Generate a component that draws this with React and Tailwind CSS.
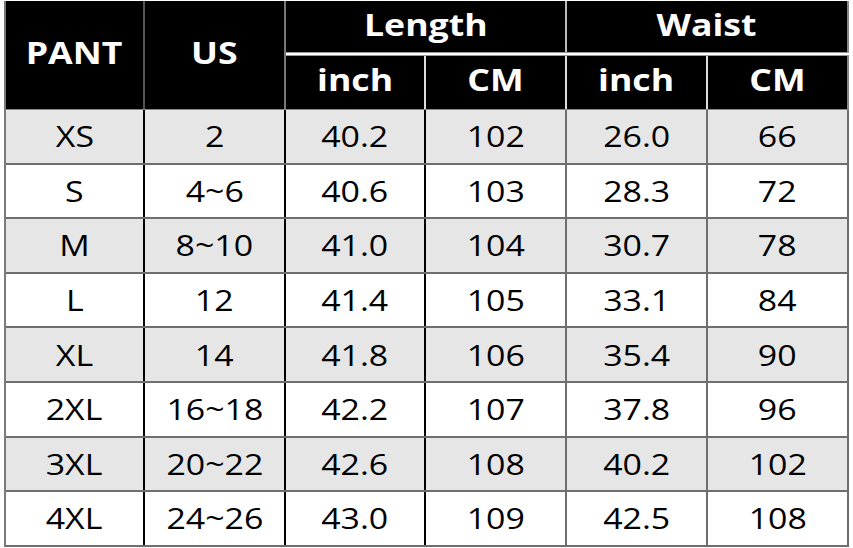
import React from 'react';

const rows = [
  ['XS', '2', '40.2', '102', '26.0', '66'],
  ['S', '4~6', '40.6', '103', '28.3', '72'],
  ['M', '8~10', '41.0', '104', '30.7', '78'],
  ['L', '12', '41.4', '105', '33.1', '84'],
  ['XL', '14', '41.8', '106', '35.4', '90'],
  ['2XL', '16~18', '42.2', '107', '37.8', '96'],
  ['3XL', '20~22', '42.6', '108', '40.2', '102'],
  ['4XL', '24~26', '43.0', '109', '42.5', '108'],
];

// line colour of each column's right edge in the body
const bodyLines = ['border-black', 'border-black', 'border-black', 'border-[#6e6e6e]', 'border-[#6e6e6e]', 'border-[#6e6e6e]'];
const widths = ['w-[141px]', 'w-[141px]', 'w-[140px]', 'w-[141px]', 'w-[141px]', 'w-[141px]'];

function Txt({ children, bold }) {
  return (
    <span className={`inline-block leading-none ${bold ? 'scale-x-[1.15] text-[31px] font-bold text-white' : 'scale-x-[1.13] text-[30px] text-black'}`}>
      {children}
    </span>
  );
}

export default function App() {
  return (
    <div className="w-[853px] h-[548px] bg-white pl-[4px] pt-[1px]" style={{ fontFamily: '"Open Sans", "Noto Sans", sans-serif' }}>
      <div className="w-[845px] border-l-2 border-[#7a7a7a]">
        {/* header */}
        <div className="flex h-[109px] border-b border-[#8a8a8a]">
          <div className="w-[139px] bg-black border-r-2 border-[#555] flex items-center justify-center pb-[6px]">
            <Txt bold>PANT</Txt>
          </div>
          <div className="w-[141px] bg-black border-r-2 border-[#777] flex items-center justify-center pb-[6px]">
            <Txt bold>US</Txt>
          </div>
          <div className="flex-1 flex flex-col">
            <div className="flex h-[51px]">
              <div className="w-[281px] bg-black border-r-2 border-[#bbb] flex items-center justify-center pb-[3px]">
                <Txt bold>Length</Txt>
              </div>
              <div className="flex-1 bg-black border-r-2 border-[#888] flex items-center justify-center pb-[3px]">
                <Txt bold>Waist</Txt>
              </div>
            </div>
            <div className="h-[5px] bg-white border-y border-[#999]" />
            <div className="flex h-[53px]">
              {['inch', 'CM', 'inch', 'CM'].map((t, i) => (
                <div
                  key={i}
                  className={`${i === 0 ? 'w-[140px]' : i === 3 ? 'flex-1' : 'w-[141px]'} bg-black border-r-2 ${i === 3 ? 'border-[#888]' : 'border-[#ddd]'} flex items-center justify-center pb-[6px]`}
                >
                  <Txt bold>{t}</Txt>
                </div>
              ))}
            </div>
          </div>
        </div>

        {/* body */}
        {rows.map((r, ri) => (
          <div key={ri} className={`flex h-[54.6px] border-b-2 border-[#6e6e6e] ${ri % 2 === 0 ? 'bg-[#e6e6e6]' : 'bg-white'}`}>
            {r.map((c, ci) => (
              <div
                key={ci}
                className={`${ci === 0 ? 'w-[139px]' : ci === 5 ? 'flex-1' : widths[ci]} border-r-2 ${bodyLines[ci]} flex items-center justify-center`}
              >
                <Txt>{c}</Txt>
              </div>
            ))}
          </div>
        ))}
      </div>
    </div>
  );
}
